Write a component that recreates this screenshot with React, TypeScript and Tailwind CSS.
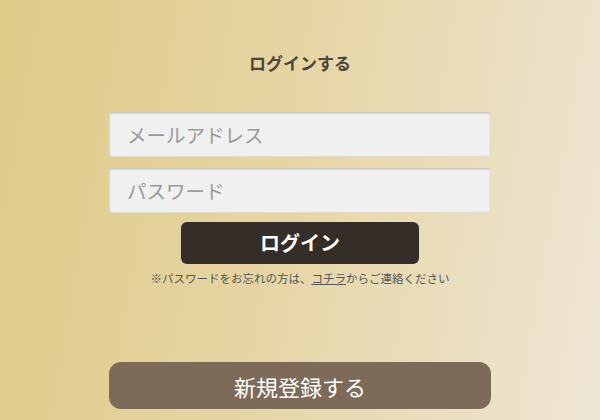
import React from "react";

export default function App() {
  return (
    <div
      className="w-[600px] h-[420px] overflow-hidden bg-[linear-gradient(100deg,#dfca87_0%,#e6d5a3_45%,#ebdfc3_80%,#efe6d5_100%)] flex flex-col items-center"
      style={{ fontFamily: '"Noto Sans CJK JP", "Noto Sans", sans-serif' }}
    >
      <h1 className="mt-[51px] text-[17px] leading-[24px] font-bold text-[#4d453b]">ログインする</h1>
      <div className="mt-[37px] w-[382px] flex flex-col gap-[11px]">
        <input
          className="h-[45px] w-full rounded-[3px] bg-[#f0f0f0] border border-[#e3dcc8] border-t-[#cfcac0] shadow-[inset_0_1px_2px_rgba(0,0,0,0.12)] pl-[17px] text-[19.5px] text-[#555] placeholder:text-[#9a9a9a] outline-none"
          placeholder="メールアドレス"
        />
        <input
          className="h-[45px] w-full rounded-[3px] bg-[#f0f0f0] border border-[#e3dcc8] border-t-[#cfcac0] shadow-[inset_0_1px_2px_rgba(0,0,0,0.12)] pl-[17px] text-[19.5px] text-[#555] placeholder:text-[#9a9a9a] outline-none"
          placeholder="パスワード"
          type="text"
        />
      </div>
      <button className="mt-[9px] w-[238px] h-[42px] rounded-[6px] bg-[#352d28] text-white text-[20px] font-bold leading-none flex items-center justify-center">
        ログイン
      </button>
      <p className="mt-[6px] text-[11.5px] leading-[16px] text-[#555]">
        ※パスワードをお忘れの方は、<span className="underline">コチラ</span>からご連絡ください
      </p>
      <button className="mt-[76px] w-[382px] h-[47px] rounded-[12px] bg-[#7d6a58] text-white text-[22px] leading-none flex items-center justify-center">
        新規登録する
      </button>
    </div>
  );
}
